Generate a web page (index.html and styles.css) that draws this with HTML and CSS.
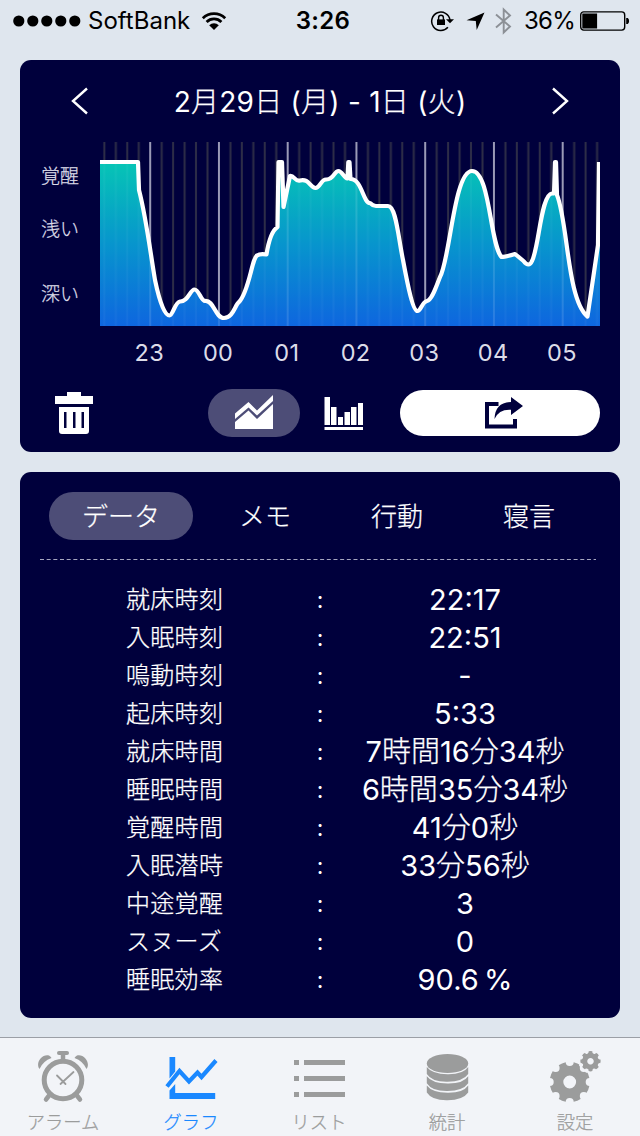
FILE: index.html
```html
<!DOCTYPE HTML>
<html lang="ja">
	<head>
		<meta charset="utf-8"/>
		<title>グラフ</title>
		<link rel="stylesheet" href="styles.css">
	</head>
	<body>
		<div class="status">
			<div class="carrier">
				<svg width="68" height="12" viewBox="0 0 68 12"><circle cx="5.8" cy="6" r="5.6"/><circle cx="19.8" cy="6" r="5.6"/><circle cx="33.8" cy="6" r="5.6"/><circle cx="47.8" cy="6" r="5.6"/><circle cx="61.8" cy="6" r="5.6"/></svg>
				<span class="name">SoftBank</span>
				<svg class="wifi" width="26" height="20" viewBox="0 0 26 20"><path d="M1.8 7.2a16.2 16.2 0 0 1 22.4 0M5.6 11a10.5 10.5 0 0 1 14.8 0" fill="none" stroke="#000" stroke-width="2.8"/><path d="M8.2 14.2a7 7 0 0 1 9.6 0L13 19z"/></svg>
			</div>
			<div class="clock">3:26</div>
			<div class="state">
				<svg width="24" height="22" viewBox="0 0 24 22"><path d="M17.9 17.3A9.2 9.2 0 1 1 20 10" fill="none" stroke="#000" stroke-width="1.5"/><path d="M16 9.2h8l-4 4z"/><path d="M7 9.4h8V15H7z"/><path d="M8.6 10V7.7a2.4 2.4 0 0 1 4.8 0V10" fill="none" stroke="#000" stroke-width="1.4"/></svg>
				<svg class="arrow" width="19" height="19" viewBox="0 0 19 19"><path d="M18.5.5 10.7 18 9.8 9 .5 8.3z"/></svg>
				<svg class="bt" width="17" height="28" viewBox="0 0 17 28"><path d="M1 7.5 15 19.5 8.7 25.5V2.5L15 8.5 1 20.5" fill="none" stroke="#8c9096" stroke-width="1.9"/></svg>
				<span class="percent">36%</span>
				<svg width="50" height="20" viewBox="0 0 50 20"><rect x=".7" y=".9" width="44" height="18.2" rx="3" fill="none" stroke="#000" stroke-width="1.4"/><path d="M2.3 2.6h14.8v14.8H2.3zM46.2 7h1.6q1.3 1 1.3 3t-1.3 3h-1.6z"/></svg>
			</div>
		</div>

		<div class="panel graph">
			<div class="date">
				<svg width="18" height="28" viewBox="0 0 18 28"><path d="M16 1.5 2 14l14 12.5"/></svg>
				<h1>2<b>月</b>29<b>日</b> (<b>月</b>) - 1<b>日</b> (<b>火</b>)</h1>
				<svg width="18" height="28" viewBox="0 0 18 28"><path d="m2 1.5 14 12.5L2 26.5"/></svg>
			</div>
			<div class="chart">
				<div class="levels"><span>覚醒</span><span>浅い</span><span>深い</span></div>
				<svg width="500" height="184" viewBox="100 142 500 184">
					<defs>
						<linearGradient id="sleep" gradientUnits="userSpaceOnUse" x1="0" y1="162" x2="0" y2="326">
							<stop offset="0" stop-color="#06c5b5"/>
							<stop offset=".5" stop-color="#0795cd"/>
							<stop offset="1" stop-color="#0e66df"/>
						</linearGradient>
						<!-- 10分ごとの線、1時間で一周 -->
						<pattern id="grid" patternUnits="userSpaceOnUse" x="149.2" y="142" width="68.75" height="184">
							<path d="M1 0v184" stroke="#9a9ab6" stroke-width="2"/>
							<path d="M12.5 0v184M23.9 0v184M35.4 0v184M46.8 0v184M58.3 0v184" stroke="#2d2d47" stroke-width="2"/>
						</pattern>
						<pattern id="gridOver" patternUnits="userSpaceOnUse" x="149.2" y="142" width="68.75" height="184">
							<path d="M1 0v184" stroke="#fff" stroke-opacity=".12" stroke-width="2"/>
							<path d="M12.5 0v184M23.9 0v184M35.4 0v184M46.8 0v184M58.3 0v184" stroke="#fff" stroke-opacity=".035" stroke-width="2"/>
						</pattern>
						<path id="wave" d="M96 162H138L139 190C146 217 150 250 155 280C160 304 165 315.5 169.5 315.5C173 315.5 175 302 180 301.5C188 302 190 289.5 194.5 289.5C199 289.5 201 301 205 301C214 300 215 318 224 318C233 318 235 305 239 302C249 292 252 258 257 255.5Q260 253.5 266.5 254.5Q270 232 277.5 227L278.5 162H282L283.5 207L290 176C294 175 295 182 300 180.5C309 178 310 188 315.5 188C320 188 321 179.5 326 179.5C334 180 334 171 338.5 171C342 171 344 178 347.5 178.5L348.3 162H349.5L350.5 179C362 179 363 203 370 203Q373 206 376 206H388C396 206 398 236 403 260C408 287 413 311 417.5 311C421 311 422 302 427 301C432 300 436 287 440 277C450 260 454 171 472 171C490 171 490 245 501.5 257Q505 257 515 254L523.5 261Q529 268 532 261C539 248 541 194 552 193.5H554L555 162H556L557 195C568 222 567 300 587.5 316.5L598 245L599 162"/>
						<clipPath id="below"><path d="M96 162H138L139 190C146 217 150 250 155 280C160 304 165 315.5 169.5 315.5C173 315.5 175 302 180 301.5C188 302 190 289.5 194.5 289.5C199 289.5 201 301 205 301C214 300 215 318 224 318C233 318 235 305 239 302C249 292 252 258 257 255.5Q260 253.5 266.5 254.5Q270 232 277.5 227L278.5 162H282L283.5 207L290 176C294 175 295 182 300 180.5C309 178 310 188 315.5 188C320 188 321 179.5 326 179.5C334 180 334 171 338.5 171C342 171 344 178 347.5 178.5L348.3 162H349.5L350.5 179C362 179 363 203 370 203Q373 206 376 206H388C396 206 398 236 403 260C408 287 413 311 417.5 311C421 311 422 302 427 301C432 300 436 287 440 277C450 260 454 171 472 171C490 171 490 245 501.5 257Q505 257 515 254L523.5 261Q529 268 532 261C539 248 541 194 552 193.5H554L555 162H556L557 195C568 222 567 300 587.5 316.5L598 245L599 162H600V326H96z"/></clipPath>
					</defs>
					<rect x="100" y="142" width="500" height="184" fill="url(#grid)"/>
					<g clip-path="url(#below)">
						<rect x="100" y="142" width="500" height="184" fill="url(#sleep)"/>
						<rect x="100" y="142" width="500" height="184" fill="url(#gridOver)"/>
					</g>
					<use href="#wave" fill="none" stroke="#fff" stroke-width="4.2" stroke-linejoin="round"/>
				</svg>
			</div>
			<div class="hours"><span>23</span><span>00</span><span>01</span><span>02</span><span>03</span><span>04</span><span>05</span></div>
			<div class="tools">
				<svg class="trash" width="38" height="42" viewBox="0 0 38 42"><path d="M12 0h14v4h12v8H0V4h12z"/><path fill-rule="evenodd" d="M4 15h30v24q0 3-3 3H7q-3 0-3-3zM9 20v16h2.5V20zm9 0v16h2.5V20zm8.5 0v16h2.5V20z"/></svg>
				<div class="pill area"><svg width="38" height="34" viewBox="0 0 38 34"><path d="M0 18.5 13.5 7 22 15.5 38 0v6L22 20.5 13.5 12.5 0 24z"/><path d="M0 27 13.5 15.5 22 24 38 9v25H0z"/></svg></div>
				<svg class="bars" width="40" height="34" viewBox="0 0 40 34"><path d="M.5 0H6v28H.5zM7 10h5.5v18H7zM14 20h5v8h-5zM20.5 15H26v13h-5.5zM27 10h5.5v18H27zM34 6h5v22h-5zM.5 30H39v3H.5z"/></svg>
				<div class="share"><svg width="40" height="34" viewBox="0 0 40 34"><path d="M14.5 8H3v22.5h28V23" fill="none" stroke="#00003c" stroke-width="4"/><path d="M10.5 23Q11 6.5 27 6V1l12 9-12 9v-5.2Q15 13 10.5 23z"/></svg></div>
			</div>
		</div>

		<div class="panel data">
			<div class="tabs"><span class="pill">データ</span><span>メモ</span><span>行動</span><span>寝言</span></div>
			<svg class="dash" width="558" height="2" viewBox="0 0 558 2"><path d="M0 1.5h556" stroke="#a7a7c0" stroke-width="1" stroke-dasharray="4 2.67"/></svg>
			<ul>
				<li><b>就床時刻</b><i>:</i><em>22:17</em></li>
				<li><b>入眠時刻</b><i>:</i><em>22:51</em></li>
				<li><b>鳴動時刻</b><i>:</i><em>-</em></li>
				<li><b>起床時刻</b><i>:</i><em>5:33</em></li>
				<li><b>就床時間</b><i>:</i><em>7<b>時間</b>16<b>分</b>34<b>秒</b></em></li>
				<li><b>睡眠時間</b><i>:</i><em>6<b>時間</b>35<b>分</b>34<b>秒</b></em></li>
				<li><b>覚醒時間</b><i>:</i><em>41<b>分</b>0<b>秒</b></em></li>
				<li><b>入眠潜時</b><i>:</i><em>33<b>分</b>56<b>秒</b></em></li>
				<li><b>中途覚醒</b><i>:</i><em>3</em></li>
				<li><b>スヌーズ</b><i>:</i><em>0</em></li>
				<li><b>睡眠効率</b><i>:</i><em>90.6 %</em></li>
			</ul>
		</div>

		<div class="menu">
			<a>
				<svg width="54" height="54" viewBox="0 0 54 54"><g fill="none" stroke="#9b9c9c"><circle cx="27" cy="30" r="18.8" stroke-width="5"/><path d="M27 3v8" stroke-width="4.5"/><path d="M23 3h8" stroke-width="4" stroke-linecap="round"/><path d="m13.5 45-3.5 4.5M40.5 45l3.5 4.5" stroke-width="4.5" stroke-linecap="round"/><path d="m21 25.5 8.5 8.5M37.5 22 24.5 34" stroke-width="1.8" stroke-linecap="round"/></g><path d="M3.5 19C-1 13 6 3.5 13 5.5q2 1 2.5 2.5Q7 11 3.5 19zM50.500 19C55 13 48 3.500 41 5.500q-2 1-2.500 2.500Q47 11 50.500 19z"/></svg>
				<span>アラーム</span>
			</a>
			<a class="now">
				<svg width="54" height="54" viewBox="0 0 54 54"><path d="M5.5 7h5.7v14.5l-5.7 7zM5.5 40.5l5.7-6.5v9h40v6H5.500z"/><path d="M3 36.5 15.5 21 25 31.5 33.5 22.5 37.5 27 52 10.5" fill="none" stroke="#1a88ff" stroke-width="4.2"/></svg>
				<span>グラフ</span>
			</a>
			<a>
				<svg width="54" height="54" viewBox="0 0 54 54"><path d="M2 10h5v5H2zM12 10h41v5H12zM2 26h5v5H2zM12 26h41v5H12zM2 42h5v5H2zM12 42h41v5H12z"/></svg>
				<span>リスト</span>
			</a>
			<a>
				<svg width="54" height="54" viewBox="0 0 54 54"><ellipse cx="27.5" cy="13.5" rx="20.7" ry="9.5"/><path id="disk" d="M6.8 17Q12 24 27.5 24.3T48.2 17V24Q43 31.5 27.5 31.8T6.8 24z"/><use href="#disk" y="9.3"/><use href="#disk" y="18.5"/></svg>
				<span>統計</span>
			</a>
			<a>
				<svg width="54" height="54" viewBox="0 0 54 54">
					<defs><g id="gear"><circle r="13.2" fill="none" stroke="#9b9c9c" stroke-width="13.6"/><g fill="#f2f4f8"><circle cy="-20" r="4"/><circle cx="14.1" cy="-14.1" r="4"/><circle cx="20" r="4"/><circle cx="14.1" cy="14.1" r="4"/><circle cy="20" r="4"/><circle cx="-14.1" cy="14.1" r="4"/><circle cx="-20" r="4"/><circle cx="-14.1" cy="-14.1" r="4"/></g></g></defs>
					<use href="#gear" transform="translate(21.7 32)"/>
					<use href="#gear" transform="translate(42.5 11.2) rotate(22.5) scale(.51)"/>
				</svg>
				<span>設定</span>
			</a>
		</div>
	</body>
</html>
```
FILE: styles.css
```css
*{box-sizing: border-box;}
body{margin: 0;width: 640px;height: 1136px;overflow: hidden;display: flex;flex-direction: column;background: #dfe6ee;font-family: Inter,"Noto Sans CJK JP",sans-serif;color: #fff;}
svg{display: block;flex: none;}
h1,ul{margin: 0;padding: 0;}
i,em{font-style: normal;font-weight: 400;}
b,.levels,.tabs,.menu{font-weight: 300;-webkit-text-stroke: 0.25px;}

.status{height: 40px;display: grid;grid-template-columns: 240px 166px 234px;align-items: center;color: #000;font-size: 24px;line-height: 42px;}
.carrier,.state{display: flex;align-items: center;}
.carrier{padding-left: 13px;}
.name{width: 102px;margin-left: 7px;}
.wifi{margin-left: 11px;}
.clock{text-align: center;font-weight: 600;letter-spacing: 0.3px;}
.state{padding-left: 24px;}
.arrow{margin-left: 12px;}
.bt{margin-left: 10px;}
.percent{width: 49px;margin: 0 7px 0 12px;letter-spacing: -0.7px;}

.panel{width: 600px;margin: 20px 20px 0;border-radius: 11px;background: #00003c;}
.graph{height: 392px;flex: none;}
.date{height: 82px;padding: 0 51px;display: flex;justify-content: space-between;align-items: center;}
.date path{fill: none;stroke: #fff;stroke-width: 2.4;}
h1{font-size: 28px;font-weight: 400;letter-spacing: 0.25px;padding-bottom: 2px;}
.chart{display: flex;}
.levels{width: 80px;padding: 20px 0 0 21px;font-size: 19px;line-height: 30px;color: #dcdce8;}
.levels span{display: block;}
.levels span + span{margin-top: 23px;}
.levels span + span + span{margin-top: 35px;}
.hours{display: grid;grid-template-columns: repeat(7,68.75px);padding-left: 95px;height: 54px;line-height: 53px;font-size: 23.5px;font-weight: 400;text-align: center;letter-spacing: 0.4px;color: #dcdce8;}
.tools{display: flex;align-items: center;height: 66px;padding-left: 35px;fill: #fff;}
.pill{background: #4d4d77;border-radius: 24px;}
.area{width: 92px;height: 48px;margin-left: 115px;padding-bottom: 2px;display: flex;align-items: center;justify-content: center;}
.bars{margin: 2px 0 0 24px;}
.share{width: 200px;height: 46px;margin-left: 36px;border-radius: 23px;background: #fff;display: flex;align-items: center;justify-content: center;fill: #00003c;}
.share svg{margin-left: 8px;}

.data{height: 546px;flex: none;padding: 20px 20px 0;}
.tabs{display: grid;grid-template-columns: 144px 120px 120px 120px;column-gap: 12px;padding-left: 9px;line-height: 50px;font-size: 26px;text-align: center;}
.tabs span{height: 48px;}
.dash{margin-top: 18px;}
ul{list-style: none;padding-top: 20px;}
li{display: grid;grid-template-columns: 246px 68px 222px;height: 38px;line-height: 40px;}
li > b{padding-left: 86px;font-size: 24px;letter-spacing: 0.3px;}
li i{text-align: center;font-size: 23px;}
li em{text-align: center;font-size: 29px;word-spacing: -3px;white-space: nowrap;}

.menu{height: 99px;margin-top: 19px;flex: none;display: grid;grid-template-columns: repeat(5,128px);border-top: 1px solid #9b9fa6;background: #f2f4f8;color: #9b9c9c;fill: #9b9c9c;}
.menu a{display: flex;flex-direction: column;align-items: center;padding: 12px 2px 0 0;}
.menu span{font-size: 18.3px;line-height: 37px;white-space: nowrap;}
.menu .now{color: #1a88ff;fill: #1a88ff;}
```
